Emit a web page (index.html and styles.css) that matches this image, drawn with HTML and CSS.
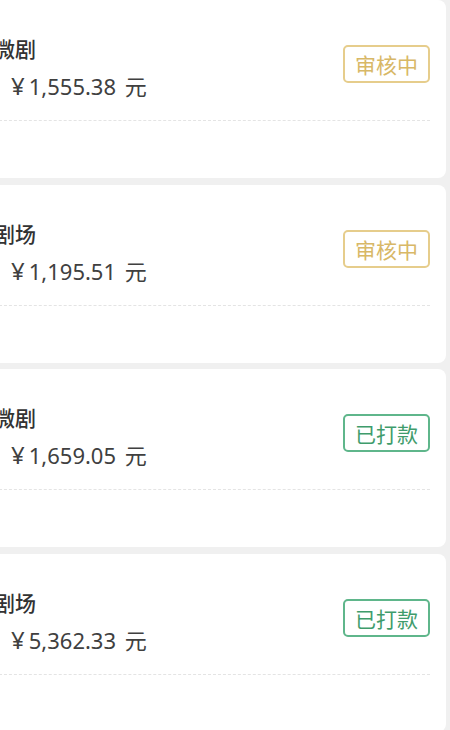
FILE: index.html
```html
<!DOCTYPE html>
<html lang="zh">
<head>
<meta charset="utf-8">
<link rel="stylesheet" href="styles.css">
</head>
<body>
<div class="list">
  <div class="card">
    <div class="row">
      <div class="info">
        <div class="title">微剧</div>
        <div class="amount"><span class="yen">¥</span>1,555.38 元</div>
      </div>
      <span class="badge pending">审核中</span>
    </div>
    <div class="divider"></div>
  </div>
  <div class="card">
    <div class="row">
      <div class="info">
        <div class="title">剧场</div>
        <div class="amount"><span class="yen">¥</span>1,195.51 元</div>
      </div>
      <span class="badge pending">审核中</span>
    </div>
    <div class="divider"></div>
  </div>
  <div class="card">
    <div class="row">
      <div class="info">
        <div class="title">微剧</div>
        <div class="amount"><span class="yen">¥</span>1,659.05 元</div>
      </div>
      <span class="badge paid">已打款</span>
    </div>
    <div class="divider"></div>
  </div>
  <div class="card">
    <div class="row">
      <div class="info">
        <div class="title">剧场</div>
        <div class="amount"><span class="yen">¥</span>5,362.33 元</div>
      </div>
      <span class="badge paid">已打款</span>
    </div>
    <div class="divider"></div>
  </div>
</div>
</body>
</html>
```
FILE: styles.css
```css
html, body {
  margin: 0;
  padding: 0;
  background: #f0f0f0;
  overflow: hidden;
}
body {
  width: 450px;
  height: 730px;
  font-family: "Noto Sans", "Noto Sans CJK SC", sans-serif;
}
.list {
  display: flex;
  flex-direction: column;
  gap: 6.5px;
  margin-left: -22px;
  margin-right: 4px;
}
.card {
  background: #fff;
  border-radius: 8px;
  height: 178px;
  box-sizing: border-box;
  padding: 33px 16px 0 16px;
}
.row {
  display: flex;
  align-items: center;
  justify-content: space-between;
}
.info {
  display: flex;
  flex-direction: column;
  gap: 8px;
}
.title {
  font-family: "Noto Sans CJK SC", sans-serif;
  font-size: 21px;
  line-height: 30px;
  font-weight: 500;
  color: #333;
}
.amount {
  font-size: 22px;
  line-height: 30px;
  color: #404040;
  margin-left: 17px;
  word-spacing: 3px;
}
.yen {
  font-size: 24px;
  margin-right: 4px;
}
.badge {
  box-sizing: border-box;
  width: 87px;
  height: 38px;
  border-radius: 5px;
  border: 2px solid;
  display: flex;
  align-items: center;
  justify-content: center;
  font-size: 21px;
  margin-bottom: 6px;
  font-family: "Noto Sans CJK SC", sans-serif;
}
.pending {
  border-color: #e6cd8c;
  color: #d8b867;
}
.paid {
  border-color: #5fb68b;
  color: #3f9c6c;
}
.divider {
  margin-top: 19px;
  border-top: 1px dashed #e4e4e4;
}
```
